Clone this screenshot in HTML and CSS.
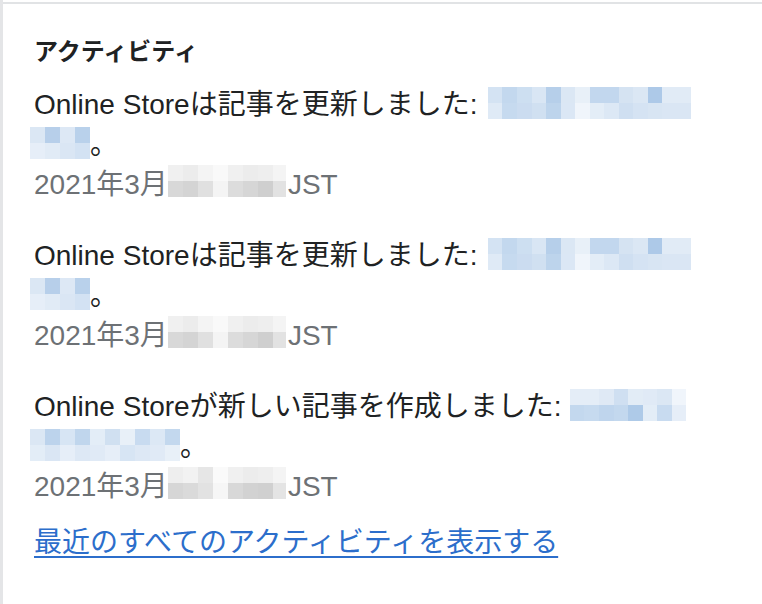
FILE: index.html
```html
<!DOCTYPE html>
<html lang="ja">
<head>
<meta charset="utf-8">
<title>アクティビティ</title>
<link rel="stylesheet" href="styles.css">
</head>
<body>
<div class="frame">
  <section class="card">
    <h2 class="card-title">アクティビティ</h2>
    <ul class="feed">
      <li class="feed-item">
        <p class="entry">Online Storeは記事を更新しました: <a class="blurred" href="#"><span class="mosaic m-a"></span><span class="mosaic m-b lead"></span></a>。</p>
        <p class="date">2021年3月<span class="mosaic m-gray"></span>JST</p>
      </li>
      <li class="feed-item">
        <p class="entry">Online Storeは記事を更新しました: <a class="blurred" href="#"><span class="mosaic m-a"></span><span class="mosaic m-b lead"></span></a>。</p>
        <p class="date">2021年3月<span class="mosaic m-gray"></span>JST</p>
      </li>
      <li class="feed-item">
        <p class="entry">Online Storeが新しい記事を作成しました: <a class="blurred" href="#"><span class="mosaic m-c"></span><span class="mosaic m-d lead"></span></a>。</p>
        <p class="date">2021年3月<span class="mosaic m-gray2"></span>JST</p>
      </li>
    </ul>
    <a class="all-link" href="#">最近のすべてのアクティビティを表示する</a>
  </section>
</div>
</body>
</html>
```

FILE: styles.css
```css
* { box-sizing: border-box; }

html, body {
  margin: 0;
  padding: 0;
  background: #ffffff;
}

body {
  font-family: "Liberation Sans", "Noto Sans CJK JP", sans-serif;
  color: #202223;
}

.frame {
  min-height: 604px;
  border-left: 3px solid #e4e5e7;
  padding-top: 2px;
}

.card {
  border-top: 2px solid #e1e3e5;
  padding: 32px 32px 0 31px;
}

.card-title {
  margin: 0;
  font-family: "Noto Sans CJK JP", sans-serif;
  font-size: 24px;
  font-weight: 700;
  line-height: 28px;
  color: #202223;
}

.feed {
  list-style: none;
  margin: 21px 0 0;
  padding: 0;
  display: flex;
  flex-direction: column;
  gap: 31px;
}

.feed-item p {
  margin: 0;
  font-size: 28px;
  line-height: 40px;
}

.date {
  color: #6d7175;
}

.blurred {
  text-decoration: none;
}

.mosaic {
  display: inline-block;
  height: 32px;
  vertical-align: -5px;
  background-repeat: no-repeat;
  background-size: 100% 50%;
  background-position: left top, left bottom;
}

.mosaic.lead {
  margin-left: -4px;
}

.m-a {
  width: 203px;
  margin-left: 3px;
  background-image:
    linear-gradient(to right, #d4e3f3 0 14px, #c3d8ee 14px 29px, #cddff1 29px 44px, #d9e6f4 44px 58px, #b6cfea 58px 73px, #dbe7f4 73px 87px, #e8f0f8 87px 102px, #c2d7ee 102px 116px, #c2d7ee 116px 131px, #d5e3f2 131px 145px, #dbe7f4 145px 160px, #adc9e8 160px 174px, #e1ebf6 174px 203px),
    linear-gradient(to right, #dfeaf6 0 14px, #c6daef 14px 29px, #cbdcf0 29px 44px, #d0e0f1 44px 58px, #bdd4ec 58px 73px, #dbe7f5 73px 87px, #f0f5fb 87px 102px, #e3edf7 102px 116px, #dce8f5 116px 131px, #cfdff1 131px 145px, #d5e3f3 145px 160px, #d8e5f3 160px 174px, #dae6f4 174px 203px);
}

.m-b {
  width: 60px;
  background-image:
    linear-gradient(to right, #dbe7f4 0 15px, #b7cfea 15px 30px, #dde8f5 30px 45px, #b9d1eb 45px 60px),
    linear-gradient(to right, #e6eef8 0 15px, #e1ebf6 15px 30px, #dae6f4 30px 45px, #d3e2f3 45px 60px);
}

.m-c {
  width: 116px;
  margin-left: 1px;
  background-image:
    linear-gradient(to right, #e4edf7 0 29px, #dfe9f5 29px 44px, #cfdff1 44px 58px, #e2ecf6 58px 73px, #e0eaf6 73px 87px, #dbe7f4 87px 102px, #f0f5fb 102px 116px),
    linear-gradient(to right, #c3d8ee 0 14px, #c6daef 14px 29px, #bfd5ed 29px 44px, #c3d8ee 44px 58px, #aecae8 58px 73px, #e3edf7 73px 87px, #c8dbf0 87px 102px, #e6eef8 102px 116px);
}

.m-d {
  width: 150px;
  background-image:
    linear-gradient(to right, #dbe7f4 0 15px, #bcd3ec 15px 30px, #d7e5f4 30px 45px, #c0d6ed 45px 60px, #e3edf7 60px 75px, #d0e0f1 75px 90px, #e8f0f8 90px 105px, #c8dbf0 105px 120px, #dce8f5 120px 135px, #c3d8ee 135px 150px),
    linear-gradient(to right, #e3edf7 0 15px, #dae6f4 15px 30px, #e6eef8 30px 45px, #dde8f5 45px 60px, #e0eaf6 60px 75px, #e6eef8 75px 90px, #d7e5f4 90px 105px, #dde8f5 105px 120px, #e0eaf6 120px 135px, #e8f0f8 135px 150px);
}

.m-gray, .m-gray2 {
  width: 118px;
  height: 32px;
  vertical-align: -3px;
  margin-right: 2px;
}

.m-gray {
  background-image:
    linear-gradient(to right, #f0f0f0 0 15px, #ececec 15px 30px, #f4f4f4 30px 45px, #f9f9f9 45px 60px, #f0f0f0 60px 75px, #ececec 75px 90px, #eeeeee 90px 105px, #f4f4f4 105px 118px),
    linear-gradient(to right, #d8d8d8 0 15px, #d4d4d4 15px 30px, #e0e0e0 30px 45px, #f4f4f4 45px 60px, #dcdcdc 60px 75px, #d6d6d6 75px 90px, #cfcfcf 90px 105px, #e2e2e2 105px 118px);
}

.m-gray2 {
  background-image:
    linear-gradient(to right, #eeeeee 0 15px, #f2f2f2 15px 30px, #e6e6e6 30px 45px, #fafafa 45px 60px, #f0f0f0 60px 75px, #ececec 75px 90px, #eeeeee 90px 105px, #f4f4f4 105px 118px),
    linear-gradient(to right, #d6d6d6 0 15px, #dadada 15px 30px, #e2e2e2 30px 45px, #f6f6f6 45px 60px, #d8d8d8 60px 75px, #d2d2d2 75px 90px, #d0d0d0 90px 105px, #e4e4e4 105px 118px);
}

.all-link {
  display: inline-block;
  margin-top: 16px;
  font-size: 28px;
  line-height: 40px;
  color: #2c6ecb;
  text-decoration: underline;
  text-underline-offset: 4px;
  text-decoration-thickness: 2px;
}
```
